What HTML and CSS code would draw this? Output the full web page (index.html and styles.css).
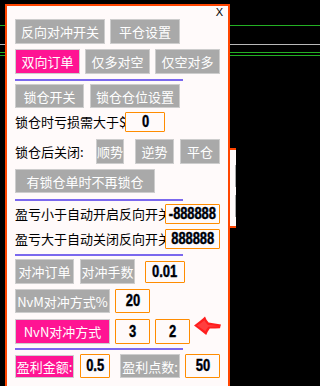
FILE: index.html
```html
<!DOCTYPE html>
<html lang="zh">
<head>
<meta charset="utf-8">
<title>对冲设置</title>
<link rel="stylesheet" href="styles.css">
</head>
<body>
<div class="side-window">
  <div class="ghost"></div>
  <div class="ghost tall"></div>
</div>
<div class="panel">
  <div class="titlebar"><span class="close">X</span></div>

  <div class="row">
    <span class="btn w90">反向对冲开关</span>
    <span class="btn w70 ml5">平仓设置</span>
  </div>
  <div class="row mt5">
    <span class="btn pink w65">双向订单</span>
    <span class="btn w65 ml5">仅多对空</span>
    <span class="btn w65 ml5">仅空对多</span>
  </div>
  <div class="sep mt5"></div>

  <div class="row mt3">
    <span class="btn w69 h24">锁仓开关</span>
    <span class="btn w90 h24 ml6">锁仓仓位设置</span>
  </div>
  <div class="row mt4">
    <span class="label w110">锁仓时亏损需大于$</span>
    <span class="field w40"><span class="num">0</span></span>
  </div>
  <div class="row mt7">
    <span class="label w81">锁仓后关闭:</span>
    <span class="btn w28">顺势</span>
    <span class="btn w39 ml11">逆势</span>
    <span class="btn w40 ml6">平仓</span>
  </div>
  <div class="row mt5">
    <span class="btn w140 h24">有锁仓单时不再锁仓</span>
  </div>
  <div class="sep mt6"></div>

  <div class="row mt3">
    <span class="label w150">盈亏小于自动开启反向开关</span>
    <span class="field w55"><span class="num">-888888</span></span>
  </div>
  <div class="row mt5">
    <span class="label w150">盈亏大于自动关闭反向开关</span>
    <span class="field w55"><span class="num">888888</span></span>
  </div>
  <div class="sep mt5"></div>

  <div class="row mt3">
    <span class="btn w59">对冲订单</span>
    <span class="btn w55 ml6">对冲手数</span>
    <span class="field w40 h22 ml10"><span class="num">0.01</span></span>
  </div>
  <div class="row mt5">
    <span class="btn w95 h24">NvM对冲方式%</span>
    <span class="field w35 h24 ml5"><span class="num">20</span></span>
  </div>
  <div class="row mt6">
    <span class="btn pink w95">NvN对冲方式</span>
    <span class="field w35 h25 ml5"><span class="num">3</span></span>
    <span class="field w35 h25 ml5"><span class="num">2</span></span>
    <svg class="pointer" width="27" height="19" viewBox="0 0 27 19" aria-hidden="true">
      <path d="M0 9.6 C4 6.5 8 3.2 11 0.4 C11.8 2.6 13 4.6 14.6 6.4 C18.6 7.2 22.8 7.8 27 8.6 C26.6 9.8 26.3 11 26 12.2 C22.6 12.3 19.2 12.4 15.8 12.6 C14.2 14.6 13 16.8 12.2 19 C8.4 15.8 4.2 12.6 0 9.6 Z" fill="#ff1e1e"/>
      <path d="M3 9.6 C6 7.8 8.6 6 10.4 4.2 C11.4 6.2 12.6 7.8 14 9 C18 9.4 21.6 9.8 24.6 10.2 C21 10.4 17.6 10.6 14.4 10.8 C13 12.2 12 13.8 11.4 15.2 C8.6 13.2 5.8 11.4 3 9.6 Z" fill="#ff5a5a" opacity="0.55"/>
    </svg>
  </div>
  <div class="sep mt4"></div>

  <div class="row mt4">
    <span class="btn pink w59 h23">盈利金额:</span>
    <span class="field w30 h24 ml6"><span class="num">0.5</span></span>
    <span class="btn w60 h24 ml10">盈利点数:</span>
    <span class="field w35 h24 ml5"><span class="num">50</span></span>
  </div>
</div>
</body>
</html>
```

FILE: styles.css
```css
* {
  box-sizing: border-box;
}

html,
body {
  margin: 0;
}

body {
  position: relative;
  width: 236px;
  height: 386px;
  overflow: hidden;
  padding: 4px 0 0 5px;
  background-color: #000;
  background-image:
    linear-gradient(#23b023, #23b023),
    linear-gradient(#b9b9b9, #b9b9b9),
    linear-gradient(#23b023, #23b023),
    linear-gradient(#23b023, #23b023);
  background-size: 100% 1px;
  background-repeat: no-repeat;
  background-position: 0 25px, 0 44px, 0 52px, 0 55px;
  font-family: "Noto Sans CJK SC", "Noto Sans", sans-serif;
  font-size: 13px;
}

/* window behind the main panel, peeking out on the right */
.side-window {
  position: absolute;
  left: 200px;
  top: 148px;
  width: 50px;
  height: 80px;
  border: 2px solid #ff4500;
  background: #fffafa;
  padding: 15px 0 0 33px;
  z-index: 0;
}

.ghost {
  width: 20px;
  height: 22px;
  border: 1px solid #a9a9a9;
  background: #f2f2f2;
}

.ghost.tall {
  margin-top: 8px;
}

.panel {
  position: relative;
  z-index: 1;
  width: 225px;
  height: 400px;
  border: 2px solid #ff4500;
  background: #fffafa;
  padding-left: 8px;
  display: flex;
  flex-direction: column;
}

.titlebar {
  height: 13px;
  display: flex;
  justify-content: flex-end;
  padding-right: 5px;
  font: 11px/13px "Liberation Sans", Arial, sans-serif;
  color: #000;
}

.row {
  display: flex;
  align-items: center;
}

.btn {
  flex: none;
  height: 25px;
  display: flex;
  align-items: center;
  justify-content: center;
  background: #a9a9a9;
  color: #fff;
  border: 1px solid #cdcdcd;
  white-space: nowrap;
  overflow: hidden;
  line-height: 1;
}

.btn.pink {
  background: #ff1493;
}

.label {
  flex: none;
  color: #000;
  white-space: nowrap;
  overflow: hidden;
  line-height: 20px;
}

.field {
  flex: none;
  height: 20px;
  display: flex;
  align-items: center;
  justify-content: center;
  border: 1px solid #ff8c00;
  border-radius: 1px;
  background: #fffafa;
  color: #000;
  overflow: hidden;
  white-space: nowrap;
}

.num {
  display: inline-block;
  font-family: "Liberation Sans", Arial, sans-serif;
  font-weight: bold;
  font-size: 16px;
  line-height: 1;
  transform: scaleX(0.8);
  -webkit-text-stroke: 0.35px #000;
  text-shadow: 0.8px 0 0 rgba(30, 110, 255, 0.45);
}

.sep {
  width: 168px;
  height: 2px;
  background: #7b68ee;
  flex: none;
}

.pointer {
  flex: none;
  align-self: flex-start;
  margin: -3px 0 0 4px;
}

/* sizes */
.w28 { width: 28px; }
.w30 { width: 30px; }
.w35 { width: 35px; }
.w39 { width: 39px; }
.w40 { width: 40px; }
.w55 { width: 55px; }
.w59 { width: 59px; }
.w60 { width: 60px; }
.w65 { width: 65px; }
.w69 { width: 69px; }
.w70 { width: 70px; }
.w81 { width: 81px; }
.w90 { width: 90px; }
.w95 { width: 95px; }
.w110 { width: 110px; }
.w140 { width: 140px; }
.w150 { width: 150px; }

.h22 { height: 22px; }
.h23 { height: 23px; }
.h24 { height: 24px; }
.h25 { height: 25px; }

/* spacing */
.mt3 { margin-top: 3px; }
.mt4 { margin-top: 4px; }
.mt5 { margin-top: 5px; }
.mt6 { margin-top: 6px; }
.mt7 { margin-top: 7px; }

.ml5 { margin-left: 5px; }
.ml6 { margin-left: 6px; }
.ml10 { margin-left: 10px; }
.ml11 { margin-left: 11px; }
```
